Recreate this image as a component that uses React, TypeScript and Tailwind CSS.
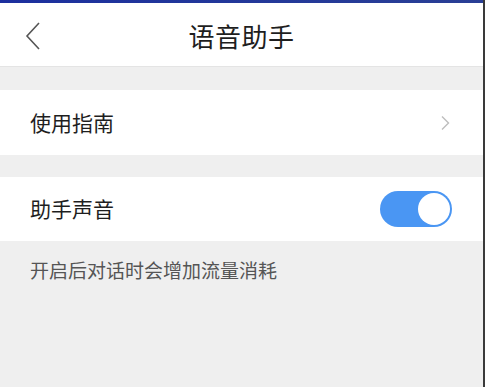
import { useState } from "react";

const font = { fontFamily: '"Noto Sans CJK SC", "Noto Sans", sans-serif' };

const App = () => {
  const [voiceOn, setVoiceOn] = useState(true);

  return (
    <div className="w-[485px] h-[387px] bg-[#efefef] flex flex-col border-r-2 border-[#3a3a3a] overflow-hidden" style={font}>
      {/* top strip */}
      <div className="h-[3px] bg-gradient-to-r from-[#1c2f9e] to-[#2a3f95]" />
      {/* header */}
      <div className="h-[64px] bg-white relative flex items-center justify-center border-b border-[#e4e4e4]">
        <div className="absolute left-[24px] top-[18px] w-[22px] h-[30px] flex items-center">
          <svg width="18" height="30" viewBox="0 0 18 30">
            <path d="M15 2 L3 15 L15 28" stroke="#555" strokeWidth="1.6" fill="none" />
          </svg>
        </div>
        <span className="text-[26px] text-[#1e1e1e] tracking-[0.5px] mt-[2px]">语音助手</span>
      </div>

      <div className="h-[23px]" />

      {/* guide row */}
      <div className="h-[65px] bg-white flex items-center justify-between pl-[30px] pr-[33px]">
        <span className="text-[21px] text-[#1e1e1e]">使用指南</span>
        <svg width="10" height="16" viewBox="0 0 10 16">
          <path d="M2 1.5 L8.5 8 L2 14.5" stroke="#bdbdbd" strokeWidth="1.4" fill="none" />
        </svg>
      </div>

      <div className="h-[22px]" />

      {/* voice row */}
      <div className="h-[64px] bg-white flex items-center justify-between pl-[30px] pr-[31px]">
        <span className="text-[21px] text-[#1e1e1e]">助手声音</span>
        <button
          onClick={() => setVoiceOn(!voiceOn)}
          className={`w-[72px] h-[36px] rounded-full flex items-center p-[2px] ${voiceOn ? "bg-[#4a96f3] justify-end" : "bg-[#d8d8d8] justify-start"}`}
        >
          <span className="w-[32px] h-[32px] rounded-full bg-white block" />
        </button>
      </div>

      <div className="pl-[30px] pt-[15px] text-[19px] text-[#555]">开启后对话时会增加流量消耗</div>
    </div>
  );
};

export default App;
